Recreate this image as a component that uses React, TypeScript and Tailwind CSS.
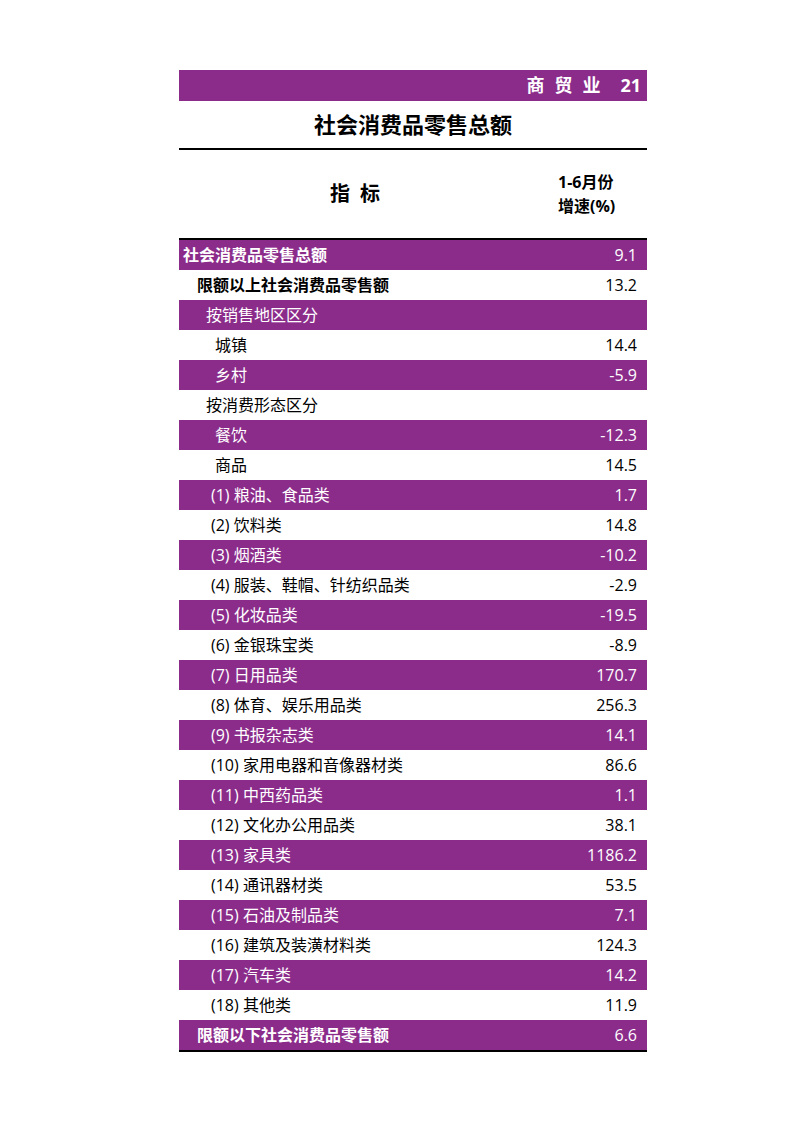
import React from "react";

interface Row {
  label: string;
  value?: string;
  indent: number;
  bold?: boolean;
}

const rows: Row[] = [
  { label: "社会消费品零售总额", value: "9.1", indent: 4, bold: true },
  { label: "限额以上社会消费品零售额", value: "13.2", indent: 18, bold: true },
  { label: "按销售地区区分", indent: 27 },
  { label: "城镇", value: "14.4", indent: 36 },
  { label: "乡村", value: "-5.9", indent: 36 },
  { label: "按消费形态区分", indent: 27 },
  { label: "餐饮", value: "-12.3", indent: 36 },
  { label: "商品", value: "14.5", indent: 36 },
  { label: "(1) 粮油、食品类", value: "1.7", indent: 32 },
  { label: "(2) 饮料类", value: "14.8", indent: 32 },
  { label: "(3) 烟酒类", value: "-10.2", indent: 32 },
  { label: "(4) 服装、鞋帽、针纺织品类", value: "-2.9", indent: 32 },
  { label: "(5) 化妆品类", value: "-19.5", indent: 32 },
  { label: "(6) 金银珠宝类", value: "-8.9", indent: 32 },
  { label: "(7) 日用品类", value: "170.7", indent: 32 },
  { label: "(8) 体育、娱乐用品类", value: "256.3", indent: 32 },
  { label: "(9) 书报杂志类", value: "14.1", indent: 32 },
  { label: "(10) 家用电器和音像器材类", value: "86.6", indent: 32 },
  { label: "(11) 中西药品类", value: "1.1", indent: 32 },
  { label: "(12) 文化办公用品类", value: "38.1", indent: 32 },
  { label: "(13) 家具类", value: "1186.2", indent: 32 },
  { label: "(14) 通讯器材类", value: "53.5", indent: 32 },
  { label: "(15) 石油及制品类", value: "7.1", indent: 32 },
  { label: "(16) 建筑及装潢材料类", value: "124.3", indent: 32 },
  { label: "(17) 汽车类", value: "14.2", indent: 32 },
  { label: "(18) 其他类", value: "11.9", indent: 32 },
  { label: "限额以下社会消费品零售额", value: "6.6", indent: 18, bold: true },
];

const indentClass: Record<number, string> = {
  4: "pl-[4px]",
  18: "pl-[18px]",
  27: "pl-[27px]",
  32: "pl-[32px]",
  36: "pl-[36px]",
};

export default function App() {
  return (
    <div
      className="min-h-[1123px] w-[794px] bg-white pt-[70px]"
      style={{ fontFamily: '"Open Sans", "Noto Sans CJK SC", sans-serif' }}
    >
      <div className="ml-[179px] w-[468px]">
        <div className="flex h-[31px] items-center justify-end bg-[#8b2c8b] pr-[6px] text-[18px] font-bold text-white">
          <span className="tracking-[10px]">商贸业</span>
          <span className="ml-[10px]">21</span>
        </div>

        <div className="flex h-[47px] items-center justify-center text-[22px] font-bold text-black">
          社会消费品零售总额
        </div>

        <div className="border-t-2 border-black">
          <div className="flex h-[88px] items-center">
            <div className="flex flex-1 justify-center pl-[4px] text-[20px] font-bold text-black tracking-[10px]">
              指标
            </div>
            <div className="flex w-[110px] flex-col items-start pl-[21px] text-[16px] font-bold leading-[24px] text-black">
              <span>1-6月份</span>
              <span>增速(%)</span>
            </div>
          </div>
        </div>

        <div className="border-y-2 border-black">
          {rows.map((row, i) => (
            <div
              key={row.label}
              className={`flex h-[30px] items-center justify-between pr-[10px] text-[16px] ${
                indentClass[row.indent]
              } ${i % 2 === 0 ? "bg-[#8b2c8b] text-white" : "bg-white text-black"} ${
                row.bold ? "font-bold" : ""
              }`}
            >
              <span>{row.label}</span>
              <span className="font-normal">{row.value}</span>
            </div>
          ))}
        </div>
      </div>
    </div>
  );
}
